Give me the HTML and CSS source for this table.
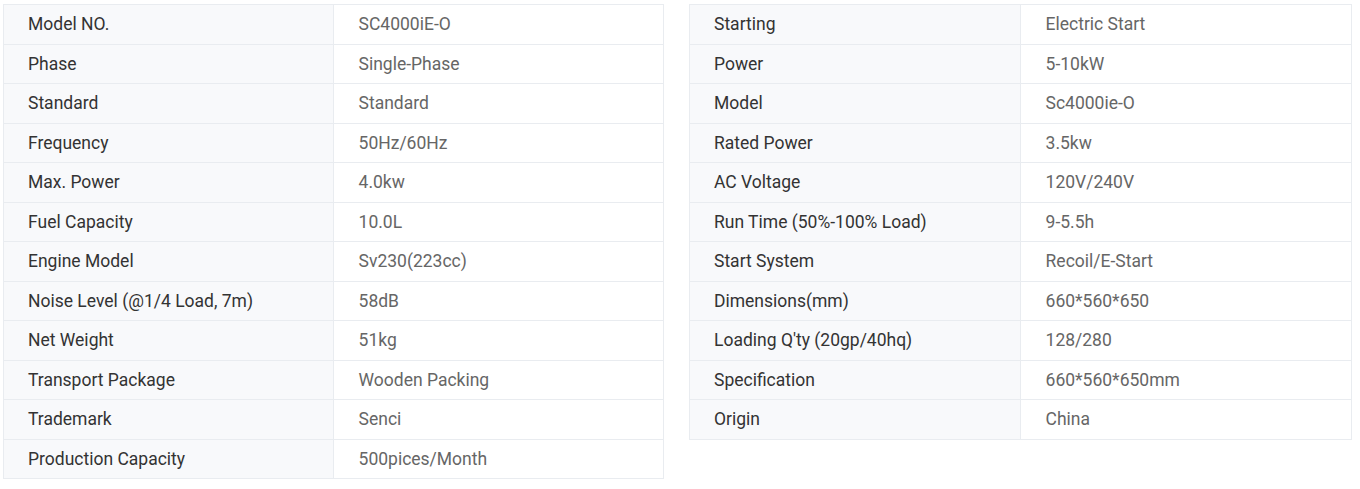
FILE: index.html
```html
<!DOCTYPE html>
<html>
<head>
<meta charset="utf-8">
<link rel="stylesheet" href="styles.css">
</head>
<body>
<div class="specs">
  <table class="spec-table">
    <tr><td class="label">Model NO.</td><td class="value">SC4000iE-O</td></tr>
    <tr><td class="label">Phase</td><td class="value">Single-Phase</td></tr>
    <tr><td class="label">Standard</td><td class="value">Standard</td></tr>
    <tr><td class="label">Frequency</td><td class="value">50Hz/60Hz</td></tr>
    <tr><td class="label">Max. Power</td><td class="value">4.0kw</td></tr>
    <tr><td class="label">Fuel Capacity</td><td class="value">10.0L</td></tr>
    <tr><td class="label">Engine Model</td><td class="value">Sv230(223cc)</td></tr>
    <tr><td class="label">Noise Level (@1/4 Load, 7m)</td><td class="value">58dB</td></tr>
    <tr><td class="label">Net Weight</td><td class="value">51kg</td></tr>
    <tr><td class="label">Transport Package</td><td class="value">Wooden Packing</td></tr>
    <tr><td class="label">Trademark</td><td class="value">Senci</td></tr>
    <tr><td class="label">Production Capacity</td><td class="value">500pices/Month</td></tr>
  </table>
  <table class="spec-table spec-table-wide">
    <tr><td class="label">Starting</td><td class="value">Electric Start</td></tr>
    <tr><td class="label">Power</td><td class="value">5-10kW</td></tr>
    <tr><td class="label">Model</td><td class="value">Sc4000ie-O</td></tr>
    <tr><td class="label">Rated Power</td><td class="value">3.5kw</td></tr>
    <tr><td class="label">AC Voltage</td><td class="value">120V/240V</td></tr>
    <tr><td class="label">Run Time (50%-100% Load)</td><td class="value">9-5.5h</td></tr>
    <tr><td class="label">Start System</td><td class="value">Recoil/E-Start</td></tr>
    <tr><td class="label">Dimensions(mm)</td><td class="value">660*560*650</td></tr>
    <tr><td class="label">Loading Q'ty (20gp/40hq)</td><td class="value">128/280</td></tr>
    <tr><td class="label">Specification</td><td class="value">660*560*650mm</td></tr>
    <tr><td class="label">Origin</td><td class="value">China</td></tr>
  </table>
</div>
</body>
</html>
```
FILE: styles.css
```css
html, body {
  margin: 0;
  padding: 0;
  background: #ffffff;
}
body {
  font-family: Roboto, "Liberation Sans", Arial, sans-serif;
}
.specs {
  display: flex;
  align-items: flex-start;
  gap: 25px;
  padding: 4px 8px 0 3px;
}
.spec-table {
  width: 661px;
  flex: 0 0 661px;
  border-collapse: collapse;
  table-layout: fixed;
}
.spec-table-wide {
  width: 663px;
  flex: 0 0 663px;
}
.spec-table td {
  border: 1px solid #e9ecf0;
  font-size: 17.5px;
  line-height: 24px;
  padding: 7px 24px 7.5px 24px;
  white-space: nowrap;
  width: 50%;
}
.spec-table .label {
  background: #f8f9fb;
  color: #333333;
}
.spec-table .value {
  background: #ffffff;
  color: #666666;
  padding-left: 25px;
}
```
